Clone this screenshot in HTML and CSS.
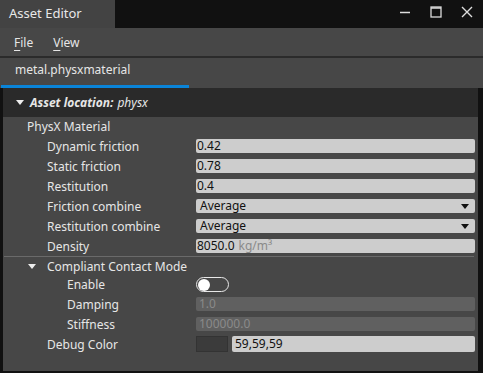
FILE: index.html
```html
<!DOCTYPE html>
<html lang="en">
<head>
    <meta charset="UTF-8">
    <title>Asset Editor</title>
    <link rel="stylesheet" href="styles.css">
</head>
<body>
    <div class="window">
        <div class="titlebar">
            <div class="title">Asset Editor</div>
            <div class="controls">
                <svg width="12" height="12" viewBox="0 0 12 12"><path d="M1 6.5h10" stroke="#ddd" stroke-width="1.5"/></svg>
                <svg width="12" height="12" viewBox="0 0 12 12"><rect x="1" y="1" width="10" height="10" fill="none" stroke="#ddd" stroke-width="1.3"/><path d="M1 2h10" stroke="#ddd" stroke-width="1.5"/></svg>
                <svg width="12" height="12" viewBox="0 0 12 12"><path d="M1 1L11 11M11 1L1 11" stroke="#ddd" stroke-width="1.4"/></svg>
            </div>
        </div>
        <div class="menubar">
            <span class="menu"><u>F</u>ile</span>
            <span class="menu"><u>V</u>iew</span>
        </div>
        <div class="tabs">
            <div class="tab">metal.physxmaterial</div>
        </div>
        <div class="content">
            <div class="header"><svg class="tri" width="8" height="5" viewBox="0 0 8 5"><path d="M0 0H8L4 5Z" fill="#eee"/></svg> <b>Asset location:</b> <i>physx</i></div>
            <div class="row lvl1"><span class="label">PhysX Material</span></div>
            <div class="row lvl2"><span class="label">Dynamic friction</span><div class="field">0.42</div></div>
            <div class="row lvl2"><span class="label">Static friction</span><div class="field">0.78</div></div>
            <div class="row lvl2"><span class="label">Restitution</span><div class="field">0.4</div></div>
            <div class="row lvl2"><span class="label">Friction combine</span><div class="field select">Average<svg class="drop" width="8" height="5" viewBox="0 0 8 5"><path d="M0 0H8L4 5Z" fill="#111"/></svg></div></div>
            <div class="row lvl2"><span class="label">Restitution combine</span><div class="field select">Average<svg class="drop" width="8" height="5" viewBox="0 0 8 5"><path d="M0 0H8L4 5Z" fill="#111"/></svg></div></div>
            <div class="row lvl2"><span class="label">Density</span><div class="field">8050.0 <span class="unit">kg/m³</span></div></div>
            <div class="sep"></div>
            <div class="row sub"><span class="twisty"><svg width="8" height="5" viewBox="0 0 8 5"><path d="M0 0H8L4 5Z" fill="#eee"/></svg></span><span class="label">Compliant Contact Mode</span></div>
            <div class="row lvl3 first"><span class="label">Enable</span><div class="toggle"><span class="knob"></span></div></div>
            <div class="row lvl3"><span class="label">Damping</span><div class="field off">1.0</div></div>
            <div class="row lvl3"><span class="label">Stiffness</span><div class="field off">100000.0</div></div>
            <div class="row lvl2"><span class="label">Debug Color</span><div class="color"><span class="swatch"></span><div class="field big">59,59,59</div></div></div>
        </div>
    </div>
</body>
</html>
```

FILE: styles.css
```css
body {
    margin: 0;
    background: #111;
    font-family: "Noto Sans", "Open Sans", sans-serif;
    font-size: 12px;
    color: #e6e6e6;
}
.window {
    width: 483px;
    height: 373px;
    display: flex;
    flex-direction: column;
    overflow: hidden;
}
.titlebar {
    height: 28px;
    display: flex;
    justify-content: space-between;
    background: #111;
}
.title {
    width: 106px;
    padding-left: 9px;
    background: #434343;
    line-height: 26px;
    font-size: 13px;
    color: #e8e8e8;
}
.controls {
    display: flex;
    gap: 19px;
    padding: 6px 10px 0 0;
}
.menubar {
    height: 28px;
    background: #474747;
    display: flex;
    align-items: center;
    gap: 20px;
    padding-left: 14px;
    border-bottom: 2px solid #2b2b2b;
}
.menu u {
    text-underline-offset: 3px;
}
.tabs {
    height: 30px;
    background: #474747;
    padding-left: 1px;
}
.tab {
    width: 174px;
    height: 27px;
    padding-left: 14px;
    line-height: 24px;
    border-bottom: 3px solid #0a84d8;
}
.content {
    flex: 1;
    margin: 0 5px 2px 3px;
    background: #474747;
}
.header {
    height: 29px;
    background: #2a2a2a;
    display: flex;
    align-items: center;
    gap: 4px;
    padding-left: 13px;
}
.header b {
    font-style: italic;
}
.tri {
    margin-right: 2px;
}
.row {
    height: 20px;
    display: flex;
    align-items: center;
    padding-right: 3px;
}
.row.lvl1 { padding-left: 24px; height: 19px; }
.row.lvl2 { padding-left: 44px; }
.row.lvl3 { padding-left: 64px; }
.row.sub { padding-left: 25px; height: 18px; }
.row.first { height: 19px; }
.label {
    width: 149px;
    flex: none;
}
.row.lvl3 .label { width: 129px; }
.twisty {
    width: 19px;
    display: flex;
}
.field {
    flex: 1;
    height: 14px;
    line-height: 14px;
    padding-left: 1px;
    background: #cdcdcd;
    color: #111;
    border-radius: 2px;
    display: flex;
    align-items: center;
}
.field.select {
    padding-left: 4px;
    justify-content: space-between;
}
.drop {
    margin-right: 6px;
}
.unit {
    color: #8a8a8a;
    margin-left: 4px;
}
.field.off {
    background: #606060;
    color: #8a8a8a;
    padding-left: 3px;
}
.sep {
    height: 1px;
    margin: 0 4px 0 1px;
    background: #6a6a6a;
}
.toggle {
    width: 30px;
    height: 13px;
    border: 1.5px solid #e8e8e8;
    border-radius: 8px;
    display: flex;
    align-items: center;
    padding-left: 1px;
}
.knob {
    width: 12px;
    height: 12px;
    border-radius: 50%;
    background: #fff;
}
.color {
    flex: 1;
    display: flex;
    gap: 4px;
    align-items: center;
}
.swatch {
    width: 30px;
    height: 14px;
    background: #3b3b3b;
    border: 1px solid #333;
}
.field.big {
    height: 16px;
    padding-left: 3px;
}
```
